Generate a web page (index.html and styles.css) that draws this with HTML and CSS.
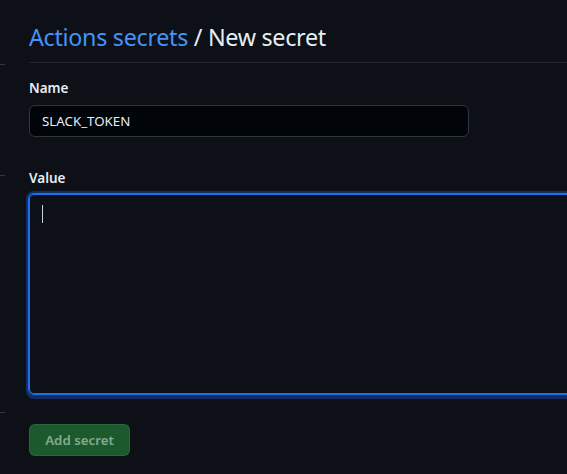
FILE: index.html
```html
<!DOCTYPE html>
<html lang="en">
<head>
<meta charset="utf-8">
<title>New secret</title>
<link rel="stylesheet" href="styles.css">
</head>
<body>
<div class="layout">
  <aside class="side">
    <div class="side-line l1"></div>
    <div class="side-line l2"></div>
    <div class="side-line l3"></div>
  </aside>
  <main class="main">
    <header class="head">
      <h1 class="title"><a class="crumb" href="#">Actions secrets</a> / New secret</h1>
    </header>
    <form class="form">
      <div class="field field-name">
        <label class="label">Name</label>
        <div class="input">SLACK_TOKEN</div>
      </div>
      <div class="field field-value">
        <label class="label">Value</label>
        <div class="textarea"><span class="caret"></span></div>
      </div>
      <div class="actions">
        <button class="btn" type="button" disabled>Add secret</button>
      </div>
    </form>
  </main>
</div>
</body>
</html>
```
FILE: styles.css
```css
html, body {
  margin: 0;
  padding: 0;
  background: #0d1117;
  color: #e6edf3;
  font-family: "Noto Sans", "Open Sans", "Liberation Sans", sans-serif;
  font-size: 14px;
}
.layout {
  display: grid;
  grid-template-columns: 5px 1fr;
  column-gap: 24px;
  height: 474px;
  overflow: hidden;
}
.side {
  display: flex;
  flex-direction: column;
  padding-top: 64px;
}
.side-line {
  height: 1px;
  background: #30363d;
}
.l2 { margin-top: 110px; }
.l3 { margin-top: 236px; }
.main {
  display: flex;
  flex-direction: column;
  min-width: 0;
}
.head {
  margin-top: 20px;
  padding-bottom: 8px;
  border-bottom: 1px solid #21262d;
}
.title {
  margin: 0;
  font-size: 23.3px;
  letter-spacing: -0.3px;
  font-weight: 400;
  line-height: 34px;
  color: #e6edf3;
  white-space: nowrap;
}
.crumb {
  color: #4493f8;
  text-decoration: none;
}
.form {
  display: flex;
  flex-direction: column;
  padding-top: 15px;
}
.field {
  display: flex;
  flex-direction: column;
}
.field-name {
  gap: 7px;
}
.field-value {
  margin-top: 31px;
  gap: 5px;
}
.label {
  font-weight: 600;
  font-size: 13.5px;
  line-height: 20px;
}
.input {
  width: 440px;
  box-sizing: border-box;
  height: 32px;
  padding: 0 12px;
  line-height: 30px;
  background: #010409;
  border: 1px solid #30363d;
  border-radius: 6px;
  color: #e6edf3;
  font-size: 13.3px;
}
.textarea {
  margin-left: -1px;
  width: 600px;
  box-sizing: border-box;
  height: 202px;
  padding: 11px 12px;
  background: #0d1117;
  border: 1px solid #1f6feb;
  border-radius: 6px;
  box-shadow: inset 0 0 0 1px #1f6feb, 0 0 0 2px #0f2f63, 0 2px 0 2px #0f2f63;
}
.caret {
  display: block;
  width: 1px;
  height: 18px;
  margin-left: 1px;
  background: #c9d1d9;
}
.actions {
  margin-top: 29px;
}
.btn {
  width: 101px;
  height: 32px;
  padding: 0;
  border: 1px solid rgba(240, 246, 252, 0.08);
  border-radius: 6px;
  background: #1c5a2d;
  color: #86aa90;
  font-family: inherit;
  font-size: 13.3px;
  font-weight: 600;
}
```
